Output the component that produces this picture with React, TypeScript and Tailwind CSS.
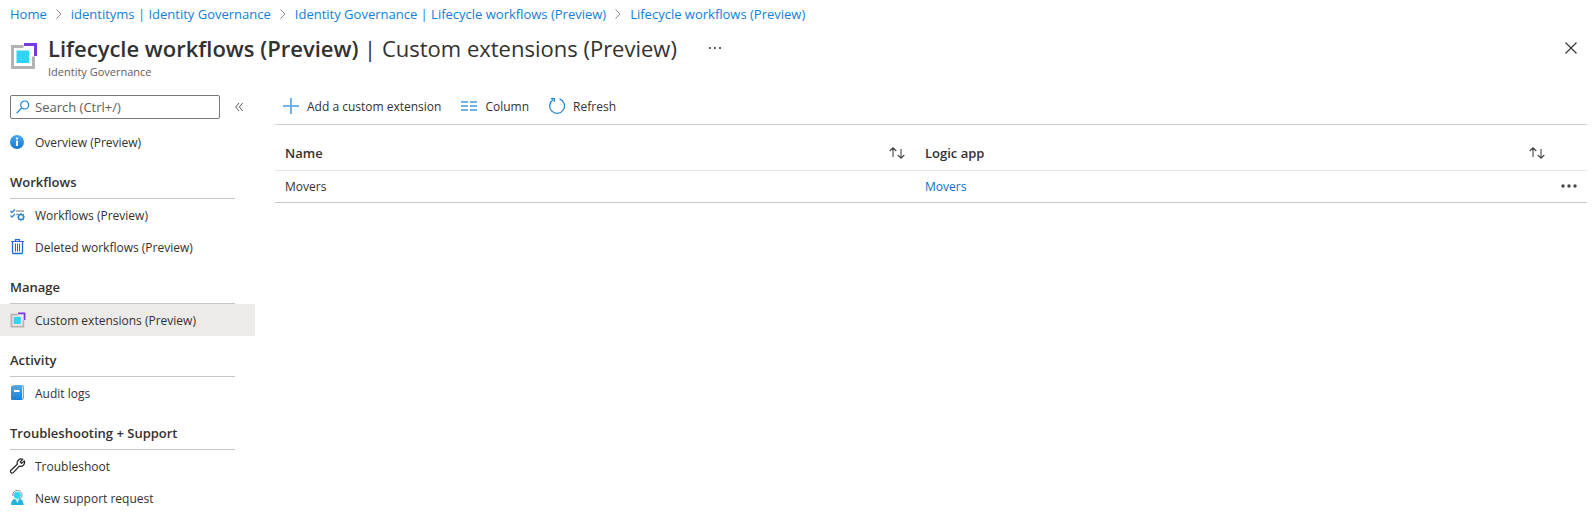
import React from "react";

type IconProps = { className?: string };

const ExtensionIcon = ({ className = "size-4" }: IconProps) => (
  <svg className={className} viewBox="0 0 28 28" aria-hidden="true">
    <path d="M13.500 4.500H2.500V25.500H23.500V14.500" fill="none" stroke="#b3b3b3" strokeWidth="3" />
    <rect x="6.500" y="8.500" width="12.500" height="12.500" fill="#32d4f5" />
    <path d="M14 2.500H25.500V14" fill="none" stroke="#773adc" strokeWidth="3" />
  </svg>
);

const InfoIcon = () => (
  <svg className="size-4" viewBox="0 0 16 16" aria-hidden="true">
    <defs>
      <linearGradient id="info" x2="0" y2="1">
        <stop stopColor="#4aa8ee" />
        <stop offset="1" stopColor="#0f79d5" />
      </linearGradient>
    </defs>
    <circle cx="7" cy="8" r="7" fill="url(#info)" />
    <circle cx="7" cy="4.500" r="1.100" fill="#fff" />
    <rect x="6.100" y="6.500" width="1.800" height="5.500" fill="#fff" />
  </svg>
);

const WorkflowIcon = () => (
  <svg className="size-4" viewBox="0 0 16 16" fill="none" aria-hidden="true">
    <path d="M0.500 4l1.500 1.500L5 2.500M0.500 8.500L2 10l3-3" stroke="#2b88d8" strokeWidth="1.300" />
    <path d="M6 4h8M6 7.500h2.500" stroke="#a3a3a3" strokeWidth="1.300" />
    <circle cx="11" cy="10" r="2.500" stroke="#2b88d8" strokeWidth="1.300" />
    <path d="M11 6v1.500M11 12.500V14M7 10h1.500M13.500 10H15M8.200 7.200l1 1M12.800 11.800l1 1M13.800 7.200l-1 1M8.200 12.800l1-1" stroke="#2b88d8" strokeWidth="1.100" />
  </svg>
);

const TrashIcon = () => (
  <svg className="size-4" viewBox="0 0 16 16" fill="none" stroke="#2169d6" aria-hidden="true">
    <path d="M1 2.500h13M5.500 2.500V0.700h4v1.800" strokeWidth="1.200" />
    <path d="M2.500 2.500V13.500a1 1 0 0 0 1 1h8a1 1 0 0 0 1-1V2.500" strokeWidth="1.300" />
    <path d="M5.500 4.500v8M7.500 4.500v8M9.500 4.500v8" />
  </svg>
);

const BookIcon = () => (
  <svg className="size-4" viewBox="0 0 16 16" aria-hidden="true">
    <defs>
      <linearGradient id="book" x2="0" y2="1">
        <stop stopColor="#4fa9ec" />
        <stop offset="1" stopColor="#1581d8" />
      </linearGradient>
    </defs>
    <rect x="3" y="0.500" width="10.500" height="14" rx="1.500" fill="#d6e8f7" stroke="#69a9dc" />
    <path d="M2.500 0.500H12V15H2.500A1.500 1.500 0 0 1 1 13.500V2A1.500 1.500 0 0 1 2.500 0.500Z" fill="url(#book)" />
    <rect x="4" y="5" width="5.500" height="2" fill="#fff" />
  </svg>
);

const WrenchIcon = () => (
  <svg className="size-4" viewBox="0 0 16 16" fill="none" stroke="#222" strokeWidth="1.200" strokeLinejoin="round" aria-hidden="true">
    <path d="M12.800 1.300A4.100 4.100 0 0 0 7.300 6.300L0.900 12.200A1.700 1.700 0 0 0 3.300 14.600L9.300 8.200A4.100 4.100 0 0 0 14.300 2.800L11.700 5.400L10.200 3.900Z" />
  </svg>
);

const SupportIcon = () => (
  <svg className="size-4" viewBox="0 0 16 16" aria-hidden="true">
    <path d="M2.800 6V5a4.600 4.600 0 0 1 9.200 0v1.500Q12 8 9 8.500" fill="none" stroke="#7a8b91" />
    <circle cx="7.300" cy="5.300" r="3.500" fill="#32d4f5" />
    <path d="M1 15Q1.300 9.500 4.500 9L7.300 10L10.200 9Q13 9.500 13.600 15Z" fill="#22b4da" />
    <path d="M5.400 9.200L7.400 13L9.200 9.200Z" fill="#c9f3fc" />
  </svg>
);

const Chevron = () => (
  <svg className="h-3 w-2 shrink-0" viewBox="0 0 8 12" fill="none" stroke="#8a8886" aria-hidden="true">
    <path d="M1.500 1.500L6 6L1.500 10.500" />
  </svg>
);

const SortIcon = () => (
  <svg className="h-3 w-4" viewBox="0 0 16 12" fill="none" stroke="#484644" strokeWidth="1.100" aria-hidden="true">
    <path d="M4 10V0.800M0.700 4L4 0.800L7.300 4M12 2V11.200M8.700 8L12 11.200L15.300 8" />
  </svg>
);

const crumbs = [
  "Home",
  "identityms | Identity Governance",
  "Identity Governance | Lifecycle workflows (Preview)",
  "Lifecycle workflows (Preview)",
];

const groups: { title: string; items: { label: string; icon: React.ReactNode; active?: boolean }[] }[] = [
  {
    title: "Workflows",
    items: [
      { label: "Workflows (Preview)", icon: <WorkflowIcon /> },
      { label: "Deleted workflows (Preview)", icon: <TrashIcon /> },
    ],
  },
  { title: "Manage", items: [{ label: "Custom extensions (Preview)", icon: <ExtensionIcon />, active: true }] },
  { title: "Activity", items: [{ label: "Audit logs", icon: <BookIcon /> }] },
  {
    title: "Troubleshooting + Support",
    items: [
      { label: "Troubleshoot", icon: <WrenchIcon /> },
      { label: "New support request", icon: <SupportIcon /> },
    ],
  },
];

function NavItem({ label, icon, active }: { label: string; icon: React.ReactNode; active?: boolean }) {
  return (
    <a
      href="#"
      aria-current={active ? "page" : undefined}
      className={`flex h-8 items-center gap-[9px] pl-2.5 ${active ? "bg-[#edebe9]" : ""}`}
    >
      {icon}
      <span className="pt-0.5">{label}</span>
    </a>
  );
}

function SortHeader({ label }: { label: string }) {
  return (
    <th scope="col" className="px-2.5 pt-3 text-left text-[13px] font-semibold">
      <div className="flex items-center justify-between">
        {label}
        <button type="button" aria-label={`Sort by ${label}`}>
          <SortIcon />
        </button>
      </div>
    </th>
  );
}

export default function App() {
  return (
    <div className="bg-white font-['Segoe_UI','Open_Sans',sans-serif] text-xs leading-5 text-[#323130]">
      <nav aria-label="Breadcrumb" className="flex h-7 items-center gap-2 pl-2.5 text-[13px] text-[#0f7fd8]">
        {crumbs.map((c, i) => (
          <React.Fragment key={c}>
            {i > 0 && <Chevron />}
            <a href="#">{c}</a>
          </React.Fragment>
        ))}
      </nav>

      <header className="flex items-start pr-[18px] pl-2.5">
        <ExtensionIcon className="mt-3.5 size-7 shrink-0" />
        <div className="ml-2.5">
          <div className="flex items-center gap-8">
            <h1 className="text-[22px] leading-10">
              <span className="font-semibold">Lifecycle workflows (Preview)</span> | Custom extensions (Preview)
            </h1>
            <button type="button" aria-label="More actions">
              <svg className="h-1 w-3" viewBox="0 0 12 4" fill="#605e5c">
                <path d="M0 1h2v2H0zM5 1h2v2H5zM10 1h2v2h-2z" />
              </svg>
            </button>
          </div>
          <p className="text-[11px] leading-2 text-[#605e5c]">Identity Governance</p>
        </div>
        <button type="button" aria-label="Close" className="mt-3.5 ml-auto">
          <svg className="size-3" viewBox="0 0 12 12" stroke="#323130" strokeWidth="1.100">
            <path d="M0.500 0.500L11.500 11.500M11.500 0.500L0.500 11.500" />
          </svg>
        </button>
      </header>

      <div className="mt-4 flex">
        <aside className="w-[255px] shrink-0 pt-[3px]">
          <div className="flex h-6 items-center gap-[15px] pl-2.5">
            <label className="flex h-6 w-[210px] items-center gap-[5px] rounded-xs border border-[#7a7876] pl-[5px]">
              <svg className="size-3.5 shrink-0" viewBox="0 0 14 14" fill="none" stroke="#1583d8" strokeWidth="1.200">
                <circle cx="8.700" cy="5" r="4" />
                <path d="M5.800 7.900L0.700 13" />
              </svg>
              <input
                type="text"
                aria-label="Search"
                placeholder="Search (Ctrl+/)"
                className="min-w-0 flex-1 bg-transparent text-[13px] outline-none placeholder:text-[#605e5c]"
              />
            </label>
            <button type="button" aria-label="Collapse menu">
              <svg className="h-2.5 w-2" viewBox="0 0 8 10" fill="none" stroke="#605e5c">
                <path d="M4 1L0.700 5L4 9M7.700 1L4.400 5L7.700 9" />
              </svg>
            </button>
          </div>
          <nav aria-label="Menu" className="pt-[7px]">
            <NavItem label="Overview (Preview)" icon={<InfoIcon />} />
            {groups.map((g) => (
              <section key={g.title}>
                <h2 className="mr-5 ml-2.5 h-[41px] border-b border-[#c8c6c4] pt-3.5 text-[13px] font-semibold">
                  {g.title}
                </h2>
                {g.items.map((item) => (
                  <NavItem key={item.label} {...item} />
                ))}
              </section>
            ))}
          </nav>
        </aside>

        <main className="mr-2 ml-5 min-w-0 flex-1">
          <div className="flex h-[33px] items-center gap-5 border-b border-[#d0cecc] pb-1 pl-2">
            <button type="button" className="flex items-center gap-2">
              <svg className="size-4" viewBox="0 0 16 16" fill="#6fb3e8">
                <path d="M7 0h2v7h7v2H9v7H7V9H0V7h7z" />
              </svg>
              <span className="pt-0.5">Add a custom extension</span>
            </button>
            <button type="button" className="flex items-center gap-2">
              <svg className="size-4" viewBox="0 0 16 16" fill="#6fb3e8">
                <path d="M0 3h7v2H0zM9 3h7v2H9zM0 7h7v2H0zM9 7h7v2H9zM0 11h7v2H0zM9 11h7v2H9z" />
              </svg>
              <span className="pt-0.5">Column</span>
            </button>
            <button type="button" className="flex items-center gap-2">
              <svg className="size-4" viewBox="0 0 16 16" fill="none" stroke="#1583d8" strokeWidth="1.200">
                <path d="M10.500 0.900A7.400 7.400 0 1 1 4 1.700M1.800 0.600H5.300V4" />
              </svg>
              <span className="pt-0.5">Refresh</span>
            </button>
          </div>
          <table className="w-full table-fixed border-collapse">
            <colgroup>
              <col />
              <col />
              <col className="w-8" />
            </colgroup>
            <thead>
              <tr className="h-[45px] border-b border-[#e8e6e4]">
                <SortHeader label="Name" />
                <SortHeader label="Logic app" />
                <th scope="col" aria-label="Actions" />
              </tr>
            </thead>
            <tbody>
              <tr className="h-8 border-b border-[#c8c6c4]">
                <td className="px-2.5 pt-0.5">Movers</td>
                <td className="px-2.5 pt-0.5">
                  <a href="#" className="text-[#0f6fd0]">Movers</a>
                </td>
                <td>
                  <button type="button" aria-label="Row actions" className="mx-auto block pr-[5px]">
                    <svg className="h-1 w-4" viewBox="0 0 16 4" fill="#484644">
                      <circle cx="2" cy="2" r="1.700" />
                      <circle cx="8" cy="2" r="1.700" />
                      <circle cx="14" cy="2" r="1.700" />
                    </svg>
                  </button>
                </td>
              </tr>
            </tbody>
          </table>
        </main>
      </div>
    </div>
  );
}
